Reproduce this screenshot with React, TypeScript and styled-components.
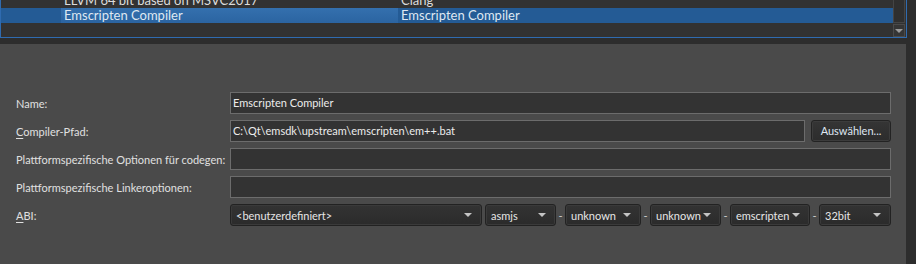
import styled, { createGlobalStyle } from "styled-components";

const GlobalStyle = createGlobalStyle`
  *, *::before, *::after {
    box-sizing: border-box;
  }
  html, body {
    margin: 0;
    padding: 0;
    background: #2d2d2d;
  }
  body {
    font-family: Lato, "Noto Sans", "Liberation Sans", sans-serif;
    font-size: 11px;
    color: #e2e2e2;
  }
`;

const Window = styled.div`
  width: 916px;
  height: 264px;
  display: flex;
  flex-direction: column;
  gap: 6px;
  overflow: hidden;
  background: #2d2d2d;
`;

const Tree = styled.div`
  width: 907px;
  height: 38px;
  flex-shrink: 0;
  border: 1px solid #2f6bb0;
  border-top: none;
  background: #323232;
  display: flex;
  overflow: hidden;
  font-size: 13px;
`;

const Rows = styled.div`
  flex: 1;
  margin-top: -7px;
  display: flex;
  flex-direction: column;
`;

const Row = styled.div<{ $selected?: boolean }>`
  height: 15px;
  flex-shrink: 0;
  display: grid;
  grid-template-columns: 60px 337px 1fr;
  background: ${({ $selected }) => ($selected ? "#245b95" : "transparent")};
  color: ${({ $selected }) => ($selected ? "#dfe8f2" : "#dcdcdc")};
  line-height: 15px;
`;

const Cell = styled.div<{ $focus?: boolean }>`
  padding-left: 3px;
  white-space: nowrap;
  overflow: hidden;
  background: ${({ $focus }) =>
    $focus ? "linear-gradient(#3470ae, #2b64a1)" : "transparent"};
`;

const ScrollBar = styled.div`
  width: 13px;
  display: flex;
  flex-direction: column;
  gap: 1px;
  padding-right: 1px;
`;

const Track = styled.div`
  flex: 1;
  border: 1px solid #444;
  border-top: none;
  background: #2f2f2f;
`;

const ScrollButton = styled.div`
  height: 13px;
  border: 1px solid #4a4a4a;
  background: #353535;
  display: flex;
  align-items: center;
  justify-content: center;
`;

const Panel = styled.div`
  width: 906px;
  flex: 1;
  background: #4a4a4a;
  padding: 48px 15px 0 16px;
`;

const Form = styled.div`
  display: grid;
  grid-template-columns: 214px minmax(0, 1fr);
  grid-auto-rows: 22px;
  row-gap: 6px;
  align-items: center;
`;

const Label = styled.label`
  color: #e0e0e0;
  white-space: nowrap;

  u {
    text-decoration: underline;
    text-underline-offset: 2px;
  }
`;

const FieldRow = styled.div`
  display: flex;
  align-items: center;
  gap: 6px;
  height: 22px;
`;

const Input = styled.div`
  flex: 1;
  height: 22px;
  border: 1px solid #6c6c6c;
  background: #333333;
  color: #ececec;
  padding-left: 2px;
  line-height: 20px;
  white-space: nowrap;
  overflow: hidden;
`;

const Button = styled.div`
  width: 80px;
  height: 22px;
  border: 1px solid #232323;
  border-radius: 3px;
  box-shadow: inset 0 0 0 1px #3c3c3c;
  background: linear-gradient(#353535, #2c2c2c);
  color: #dfe6f2;
  text-align: center;
  line-height: 20px;
`;

const ComboRow = styled.div`
  display: flex;
  align-items: center;
  height: 22px;
`;

const Combo = styled.div<{ $w: number }>`
  width: ${({ $w }) => $w}px;
  flex-shrink: 0;
  height: 22px;
  border: 1px solid #222;
  border-radius: 3px;
  box-shadow: inset 0 0 0 1px #3a3a3a;
  background: linear-gradient(#333, #2b2b2b);
  display: flex;
  align-items: center;
  justify-content: space-between;
  padding: 0 9px 0 5px;
  color: #e6e6e6;
  white-space: nowrap;
`;

const Sep = styled.span<{ $w: number }>`
  width: ${({ $w }) => $w}px;
  flex-shrink: 0;
  text-align: center;
  color: #cfcfcf;
`;

const Arrow = ({ color = "#c4c4c4" }: { color?: string }) => (
  <svg width="8" height="4" viewBox="0 0 8 4">
    <path d="M0 0 H8 L4 4 Z" fill={color} />
  </svg>
);

const abi = [
  { text: "asmjs", w: 71 },
  { text: "unknown", w: 76 },
  { text: "unknown", w: 71 },
  { text: "emscripten", w: 80 },
  { text: "32bit", w: 72 },
];

function App() {
  return (
    <>
      <GlobalStyle />
      <Window>
        <Tree>
          <Rows>
            <Row>
              <div />
              <Cell>LLVM 64 bit based on MSVC2017</Cell>
              <Cell>Clang</Cell>
            </Row>
            <Row $selected>
              <div />
              <Cell $focus>Emscripten Compiler</Cell>
              <Cell>Emscripten Compiler</Cell>
            </Row>
          </Rows>
          <ScrollBar>
            <Track />
            <ScrollButton>
              <Arrow color="#9a9a9a" />
            </ScrollButton>
          </ScrollBar>
        </Tree>
        <Panel>
          <Form>
            <Label>Name:</Label>
            <FieldRow>
              <Input>Emscripten Compiler</Input>
            </FieldRow>

            <Label>
              <u>C</u>ompiler-Pfad:
            </Label>
            <FieldRow>
              <Input>C:\Qt\emsdk\upstream\emscripten\em++.bat</Input>
              <Button>Auswählen...</Button>
            </FieldRow>

            <Label>Plattformspezifische Optionen für codegen:</Label>
            <FieldRow>
              <Input />
            </FieldRow>

            <Label>Plattformspezifische Linkeroptionen:</Label>
            <FieldRow>
              <Input />
            </FieldRow>

            <Label>
              <u>A</u>BI:
            </Label>
            <ComboRow>
              <Combo $w={252}>
                <span>&lt;benutzerdefiniert&gt;</span>
                <Arrow />
              </Combo>
              {abi.map((a, i) => (
                <>
                  <Sep key={`s${i}`} $w={i === 0 ? 3 : 9}>
                    {i > 0 ? "-" : ""}
                  </Sep>
                  <Combo key={`c${i}`} $w={a.w}>
                    <span>{a.text}</span>
                    <Arrow />
                  </Combo>
                </>
              ))}
            </ComboRow>
          </Form>
        </Panel>
      </Window>
    </>
  );
}

export default App;
